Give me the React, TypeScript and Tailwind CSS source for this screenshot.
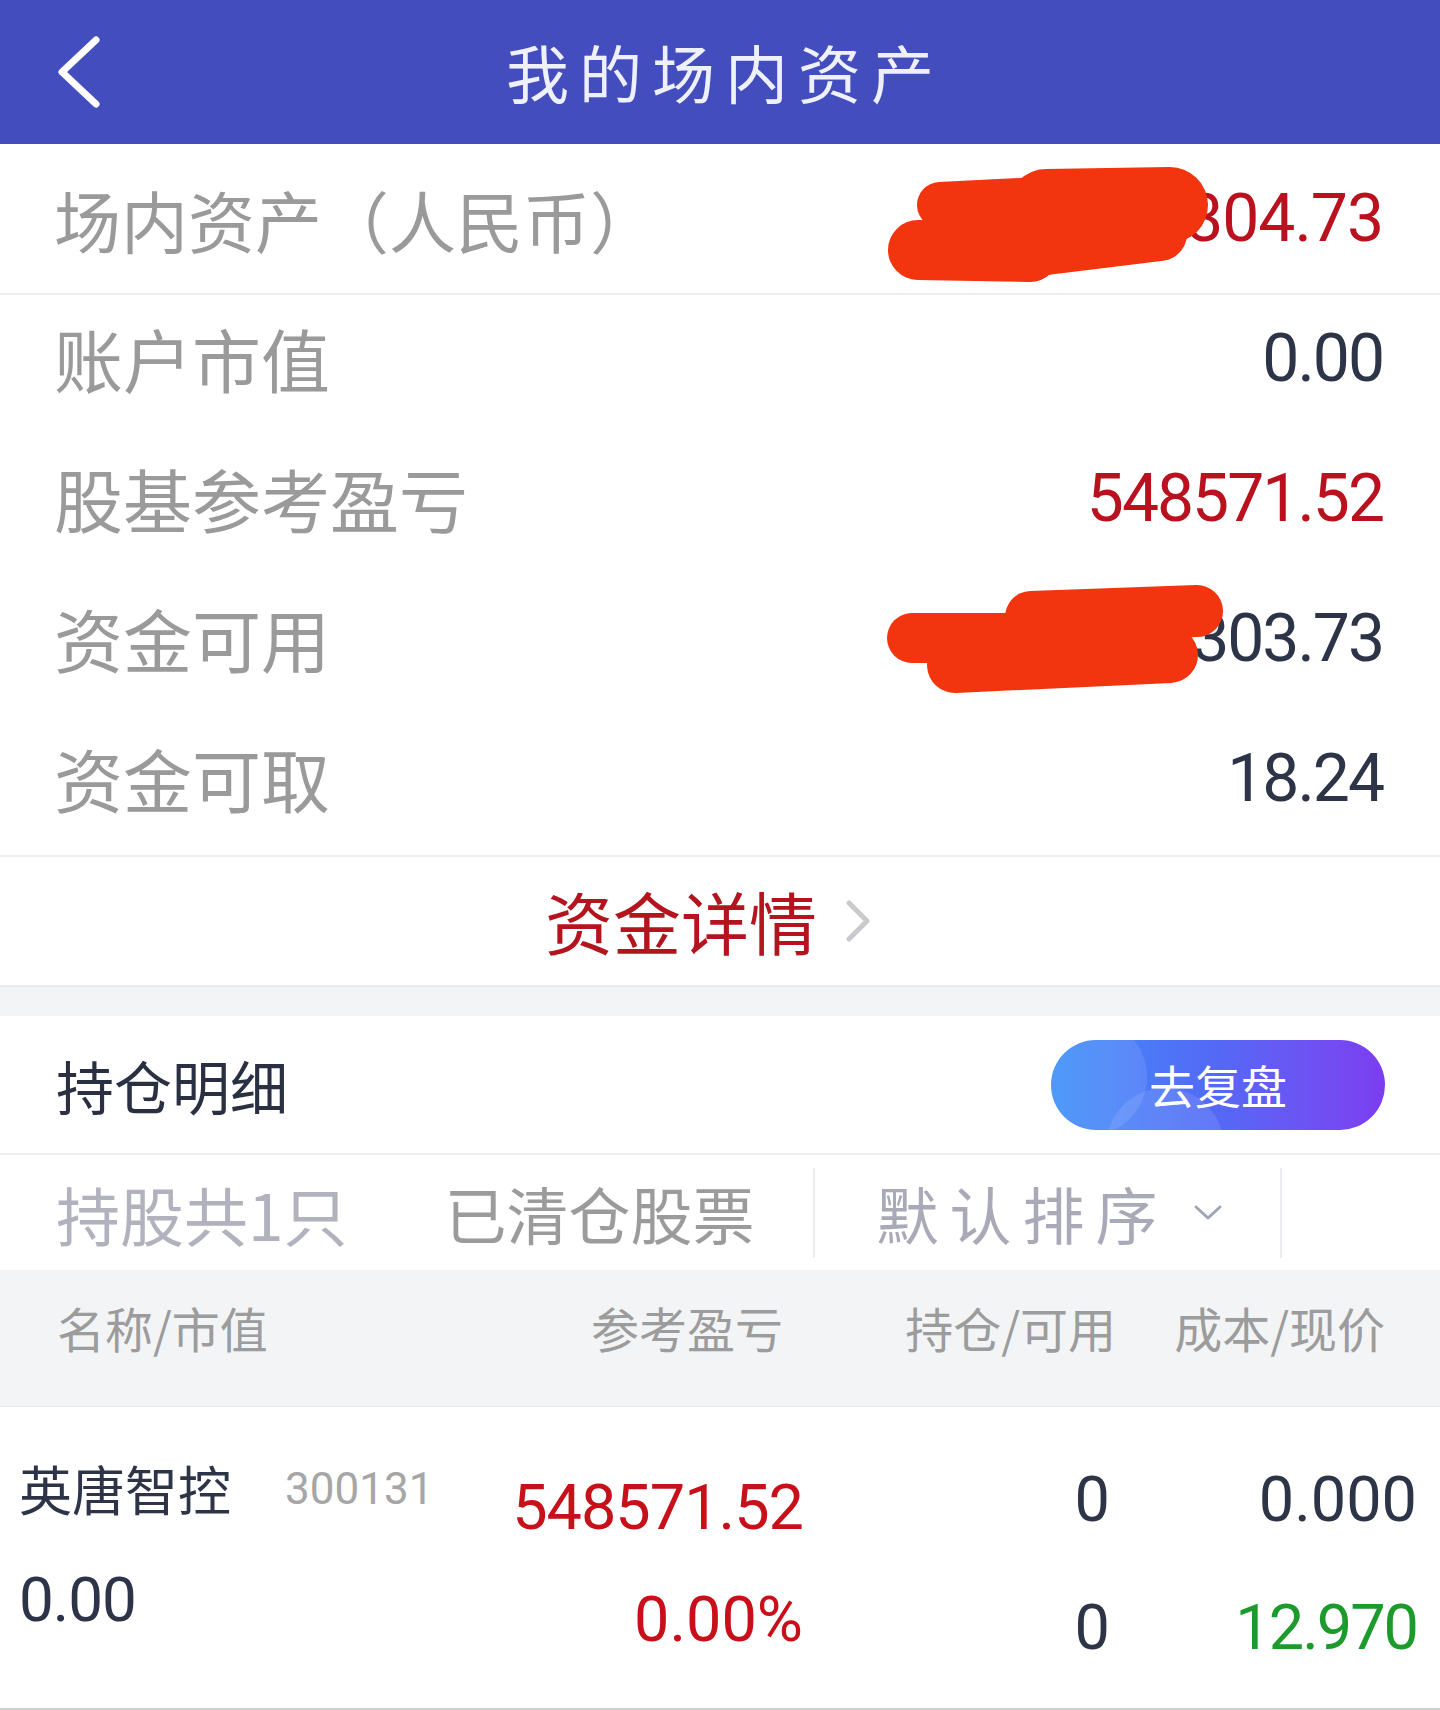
const cjk = "font-['Noto_Sans_CJK_SC',sans-serif]";
const num = "font-['Roboto','Noto_Sans_CJK_SC',sans-serif]";

const summary = [
  { label: "账户市值", value: "0.00", tone: "text-[#2d3448]" },
  { label: "股基参考盈亏", value: "548571.52", tone: "text-[#b9111d]" },
  { label: "资金可用", value: "303.73", tone: "text-[#2d3448]" },
  { label: "资金可取", value: "18.24", tone: "text-[#2d3448]" },
];

function Redactions() {
  // red marker scribbles over the hidden digits
  return (
    <svg
      className="pointer-events-none absolute left-0 top-0"
      width="1440"
      height="1710"
      viewBox="0 0 1440 1710"
    >
      <g stroke="#f2350f" strokeLinecap="round" fill="none">
        <path d="M1046 207 L1170 205" strokeWidth="76" />
        <path d="M940 205 L1040 200" strokeWidth="46" />
        <path d="M918 250 L1030 252" strokeWidth="60" />
        <path d="M1030 250 L1160 234" strokeWidth="54" />
        <path d="M1031 617 L1197 611" strokeWidth="52" />
        <path d="M912 638 L1060 638" strokeWidth="50" />
        <path d="M955 665 L1170 655" strokeWidth="56" />
      </g>
    </svg>
  );
}

export default function App() {
  return (
    <div className={`relative h-[1710px] w-[1440px] overflow-hidden bg-white ${cjk}`}>
      {/* top bar */}
      <div className="grid h-[144px] grid-cols-[1fr_auto_1fr] items-center bg-[#444dbd]">
        <div className="pl-[56px]">
          <svg width="50" height="80" viewBox="0 0 50 80">
            <path
              d="M40 8 L6 40 L40 72"
              stroke="#ffffff"
              strokeWidth="7"
              fill="none"
              strokeLinecap="round"
              strokeLinejoin="round"
            />
          </svg>
        </div>
        <h1 className="pl-[10px] pb-[4px] text-[63px] leading-none tracking-[10px] text-[#eef0fb]">
          我的场内资产
        </h1>
        <div />
      </div>

      {/* summary */}
      <div className="flex h-[151px] items-center justify-between border-b-2 border-[#efefef] pl-[54px] pr-[57px]">
        <span className="text-[67px] leading-none text-[#9a9a9a]">场内资产（人民币）</span>
        <span className={`${num} text-[66px] leading-none tracking-[-1px] text-[#b9111d]`}>
          304.73
        </span>
      </div>
      <div className="border-b-2 border-[#efefef]">
        {summary.map((r) => (
          <div
            key={r.label}
            className="flex h-[140px] items-center justify-between pb-[13px] pl-[54px] pr-[57px]"
          >
            <span className="text-[69px] leading-none text-[#9a9a9a]">{r.label}</span>
            <span className={`${num} text-[66px] leading-none tracking-[-2px] ${r.tone}`}>
              {r.value}
            </span>
          </div>
        ))}
      </div>

      <div className="flex h-[128px] items-center justify-center gap-[26px] pr-[22px]">
        <span className="text-[68px] leading-none text-[#b3141e]">资金详情</span>
        <svg width="30" height="44" viewBox="0 0 30 44">
          <path
            d="M6 4 L24 22 L6 40"
            stroke="#c9c9ce"
            strokeWidth="5"
            fill="none"
            strokeLinecap="round"
            strokeLinejoin="round"
          />
        </svg>
      </div>

      <div className="h-[31px] border-t-2 border-[#ececef] bg-[#f3f4f6]" />

      {/* holdings header */}
      <div className="flex h-[137px] items-center justify-between pl-[56px] pr-[55px]">
        <span className="text-[58px] leading-none text-[#2a3042]">持仓明细</span>
        <button className="relative h-[90px] w-[334px] overflow-hidden rounded-full bg-gradient-to-r from-[#3a8ef8] via-[#5468f6] to-[#7c3cf0]">
          <span className="absolute left-[-22px] top-[-22px] h-[118px] w-[118px] rounded-full bg-white/10" />
          <span className="absolute left-[55px] top-[48px] h-[118px] w-[118px] rounded-full bg-white/10" />
          <span className="relative text-[46px] leading-none text-white">去复盘</span>
        </button>
      </div>

      <div className="flex h-[117px] items-center border-t-2 border-[#eceef2]">
        <span className="pl-[56px] text-[64px] leading-none text-[#b1b2be]">持股共1只</span>
        <span className="pl-[97px] text-[62px] leading-none text-[#9b9b9b]">已清仓股票</span>
        <div className="ml-[58px] h-[90px] w-[2px] bg-[#ececf0]" />
        <span className="pl-[62px] text-[62px] leading-none tracking-[11px] text-[#a9a9b7]">
          默认排序
        </span>
        <svg className="ml-[24px]" width="30" height="20" viewBox="0 0 30 20">
          <path
            d="M3 4 L15 15 L27 4"
            stroke="#a0a5b4"
            strokeWidth="3"
            fill="none"
            strokeLinecap="round"
            strokeLinejoin="round"
          />
        </svg>
        <div className="ml-[57px] h-[90px] w-[2px] bg-[#ececf0]" />
      </div>

      {/* table head */}
      <div className="grid h-[137px] grid-cols-[526px_200px_333px_269px] items-center border-b border-[#e6e7ea] bg-[#f3f4f6] pb-[22px] pl-[57px] text-[48px] leading-none text-[#9c9c9c]">
        <span>名称/市值</span>
        <span className="text-right">参考盈亏</span>
        <span className="text-right">持仓/可用</span>
        <span className="text-right">成本/现价</span>
      </div>

      {/* position row */}
      <div className={`grid h-[303px] grid-cols-[460px_324px_307px_307px] border-b-2 border-[#cfcfd2] pl-[19px] ${num}`}>
        <div className="flex flex-col pt-[55px]">
          <div className="flex items-center gap-[54px]">
            <span className={`${cjk} text-[53px] leading-none text-[#2d3448]`}>英唐智控</span>
            <span className="text-[44px] leading-none text-[#a6a6a6]">300131</span>
          </div>
          <span className="mt-[54px] text-[62px] leading-none tracking-[-1px] text-[#2d3448]">0.00</span>
        </div>
        <div className="flex flex-col items-end pt-[69px] text-[63px] leading-none text-[#c8101a]">
          <span className="tracking-[-1px]">548571.52</span>
          <span className="mt-[49px]">0.00%</span>
        </div>
        <div className="flex flex-col items-end pt-[61px] text-[63px] leading-none text-[#2d3448]">
          <span>0</span>
          <span className="mt-[65px]">0</span>
        </div>
        <div className="flex flex-col items-end pt-[61px] text-[63px] leading-none">
          <span className="text-[#2d3448]">0.000</span>
          <span className="mt-[65px] tracking-[-2px] text-[#1c9a2b]">12.970</span>
        </div>
      </div>

      <Redactions />
    </div>
  );
}
